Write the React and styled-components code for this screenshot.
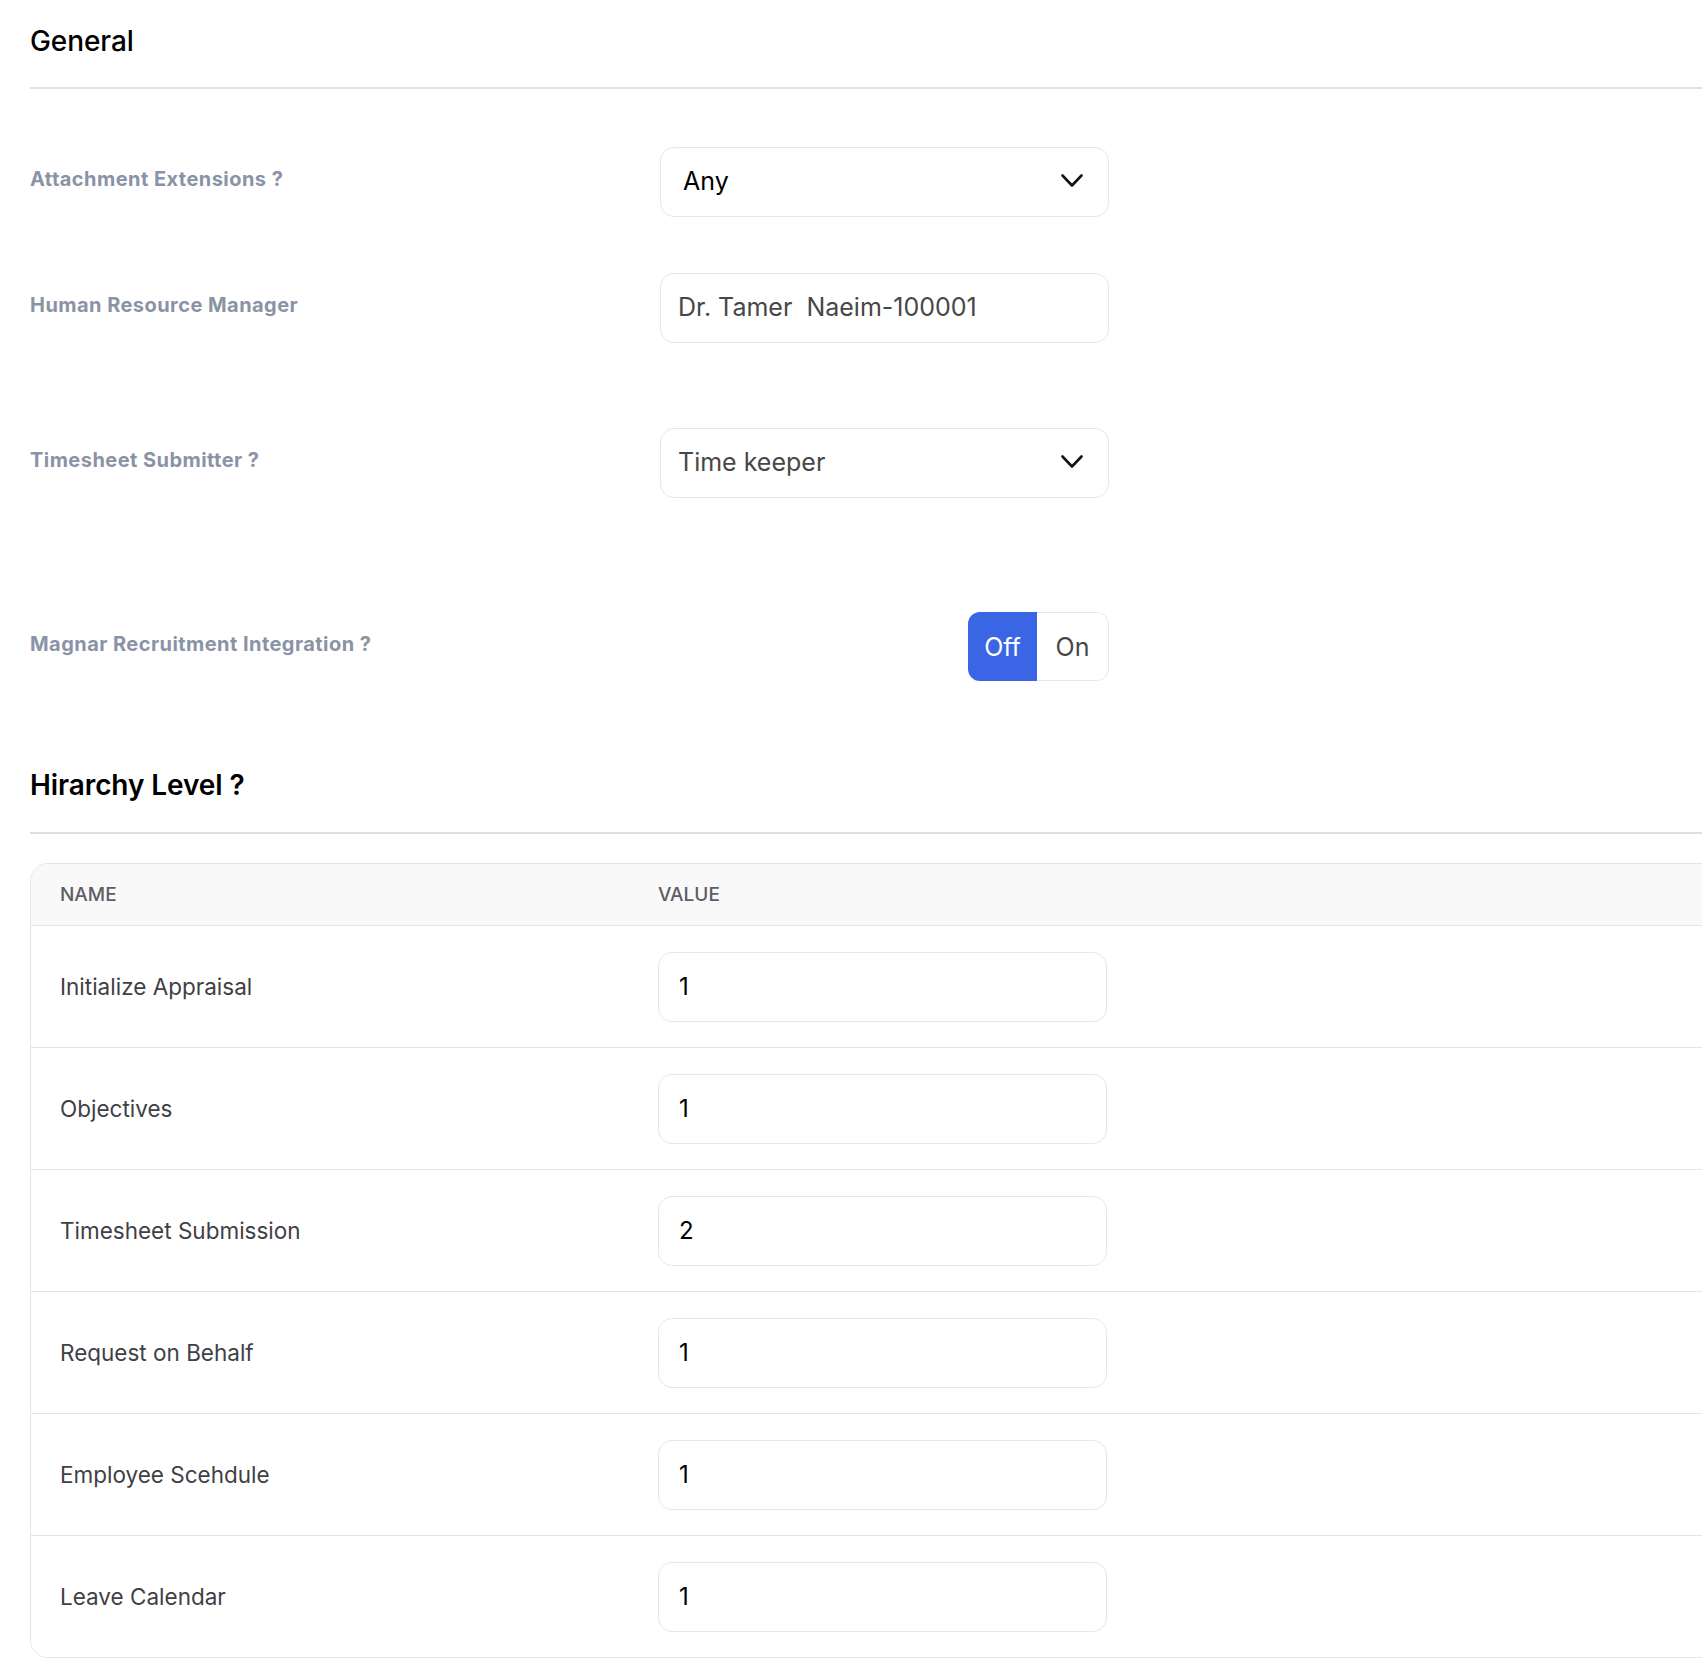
import React from 'react';
import styled, { createGlobalStyle } from 'styled-components';

const GlobalStyle = createGlobalStyle`
  html, body {
    margin: 0;
    padding: 0;
    background: #ffffff;
    overflow-x: hidden;
  }
  body {
    font-family: "Inter", "Liberation Sans", sans-serif;
    color: #000;
  }
`;

const Page = styled.div`
  padding: 24px 0 40px 30px;
  width: 1720px;
`;

const SectionTitle = styled.h2`
  margin: ${p => p.$top || 0}px 0 0;
  font-size: 28px;
  line-height: 34px;
  font-weight: ${p => p.$bold ? 600 : 500};
  color: #000;
  letter-spacing: -0.1px;
`;

const Divider = styled.hr`
  margin: ${p => p.$top}px 0 0;
  border: none;
  height: 2px;
  background: #dde1e6;
`;

const FieldRow = styled.div`
  display: flex;
  align-items: flex-start;
  margin-top: ${p => p.$top}px;
`;

const Label = styled.div`
  width: 630px;
  padding-top: 20px;
  font-size: 20px;
  line-height: 24px;
  font-weight: 700;
  letter-spacing: 0.45px;
  color: #8a93a6;
`;

const Control = styled.div`
  width: 449px;
  display: flex;
  justify-content: ${p => p.$end ? 'flex-end' : 'flex-start'};
`;

const Box = styled.div`
  box-sizing: border-box;
  width: 449px;
  height: 70px;
  border: 1px solid #e6e6ec;
  border-radius: 14px;
  background: #fff;
  display: flex;
  align-items: center;
  justify-content: space-between;
  padding: 0 25px 2px ${p => p.$inset || 17}px;
  font-size: 25px;
  color: ${p => p.$dark ? '#000' : '#474747'};
`;

const Chevron = () => (
  <svg width="22" height="14" viewBox="0 0 22 14" fill="none">
    <polyline points="1.5,1.5 11,11.5 20.5,1.5" stroke="#151515" strokeWidth="2.6" strokeLinecap="round" strokeLinejoin="round" />
  </svg>
);

const Toggle = styled.div`
  display: inline-flex;
  height: 69px;
  border-radius: 12px;
  overflow: hidden;
`;

const Segment = styled.div`
  box-sizing: border-box;
  width: ${p => p.$active ? 69 : 72}px;
  display: flex;
  align-items: center;
  justify-content: center;
  font-size: 25px;
  background: ${p => p.$active ? '#3a66e5' : '#fff'};
  color: ${p => p.$active ? '#fff' : '#474747'};
  border: ${p => p.$active ? 'none' : '1px solid #e8e8ec'};
  border-left: none;
  border-radius: ${p => p.$active ? '0' : '0 12px 12px 0'};
`;

const Table = styled.div`
  margin-top: 29px;
  border: 1px solid #e4e4e7;
  border-radius: 18px;
  overflow: hidden;
`;

const Row = styled.div`
  display: grid;
  grid-template-columns: 627px 1fr;
  align-items: center;
  height: ${p => p.$head ? 61 : 121}px;
  background: ${p => p.$head ? '#f9f9f9' : '#fff'};
  border-top: ${p => p.$head ? 'none' : '1px solid #e4e4e7'};
`;

const HeadCell = styled.div`
  padding-left: ${p => p.$first ? 29 : 0}px;
  font-size: 19px;
  font-weight: 500;
  color: #5d5d66;
  text-transform: uppercase;
`;

const Cell = styled.div`
  padding-left: ${p => p.$first ? 29 : 0}px;
  font-size: 22.5px;
  color: #3f3f46;
`;

const NumberInput = styled.div`
  box-sizing: border-box;
  width: 449px;
  height: 70px;
  border: 1px solid #e6e6ee;
  border-radius: 14px;
  display: flex;
  align-items: center;
  padding-left: 20px;
  font-size: 24px;
  color: #000;
`;

const levels = [
  ['Initialize Appraisal', '1'],
  ['Objectives', '1'],
  ['Timesheet Submission', '2'],
  ['Request on Behalf', '1'],
  ['Employee Scehdule', '1'],
  ['Leave Calendar', '1'],
];

export default function App() {
  return (
    <>
      <GlobalStyle />
      <Page>
        <SectionTitle>General</SectionTitle>
        <Divider $top={29} />

        <FieldRow $top={58}>
          <Label>Attachment Extensions ?</Label>
          <Control>
            <Box $dark $inset={22}>Any<Chevron /></Box>
          </Control>
        </FieldRow>

        <FieldRow $top={56}>
          <Label>Human Resource Manager</Label>
          <Control>
            <Box>Dr. Tamer&nbsp; Naeim-100001</Box>
          </Control>
        </FieldRow>

        <FieldRow $top={85}>
          <Label>Timesheet Submitter ?</Label>
          <Control>
            <Box>Time keeper<Chevron /></Box>
          </Control>
        </FieldRow>

        <FieldRow $top={114}>
          <Label>Magnar Recruitment Integration ?</Label>
          <Control $end>
            <Toggle>
              <Segment $active>Off</Segment>
              <Segment>On</Segment>
            </Toggle>
          </Control>
        </FieldRow>

        <SectionTitle $top={87} $bold>Hirarchy Level ?</SectionTitle>
        <Divider $top={30} />

        <Table>
          <Row $head>
            <HeadCell $first>Name</HeadCell>
            <HeadCell>Value</HeadCell>
          </Row>
          {levels.map(([name, value]) => (
            <Row key={name}>
              <Cell $first>{name}</Cell>
              <Cell><NumberInput>{value}</NumberInput></Cell>
            </Row>
          ))}
        </Table>
      </Page>
    </>
  );
}
